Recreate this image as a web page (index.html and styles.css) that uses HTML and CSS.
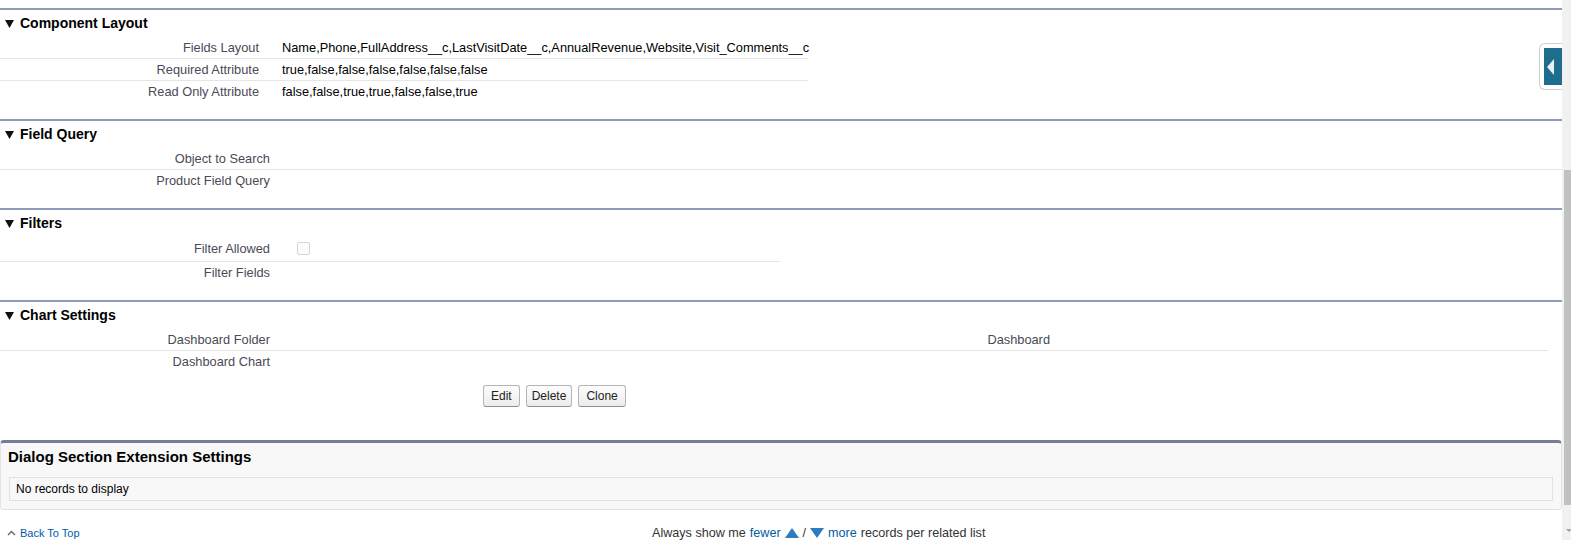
FILE: index.html
```html
<!DOCTYPE html>
<html lang="en">
<head>
  <meta charset="UTF-8" />
  <title>Component Settings</title>
  <link rel="stylesheet" href="styles.css">
</head>
<body>

<div class="main">

  <div class="section">
    <div class="section-head">
      <svg class="tri" width="9" height="8" viewBox="0 0 9 8"><polygon points="0,0 9,0 4.5,8" /></svg>
      Component Layout
    </div>
    <div class="detail detail-layout">
      <div class="row">
        <div class="label">Fields Layout</div>
        <div class="value">Name,Phone,FullAddress__c,LastVisitDate__c,AnnualRevenue,Website,Visit_Comments__c</div>
      </div>
      <div class="row">
        <div class="label">Required Attribute</div>
        <div class="value">true,false,false,false,false,false,false</div>
      </div>
      <div class="row">
        <div class="label">Read Only Attribute</div>
        <div class="value">false,false,true,true,false,false,true</div>
      </div>
    </div>
  </div>

  <div class="section">
    <div class="section-head">
      <svg class="tri" width="9" height="8" viewBox="0 0 9 8"><polygon points="0,0 9,0 4.5,8" /></svg>
      Field Query
    </div>
    <div class="detail detail-query">
      <div class="row">
        <div class="label">Object to Search</div>
        <div class="value"></div>
      </div>
      <div class="row">
        <div class="label">Product Field Query</div>
        <div class="value"></div>
      </div>
    </div>
  </div>

  <div class="section">
    <div class="section-head">
      <svg class="tri" width="9" height="8" viewBox="0 0 9 8"><polygon points="0,0 9,0 4.5,8" /></svg>
      Filters
    </div>
    <div class="detail detail-filters">
      <div class="row row-check">
        <div class="label">Filter Allowed</div>
        <div class="value"><span class="checkbox"></span></div>
      </div>
      <div class="row">
        <div class="label">Filter Fields</div>
        <div class="value"></div>
      </div>
    </div>
  </div>

  <div class="section section-last">
    <div class="section-head">
      <svg class="tri" width="9" height="8" viewBox="0 0 9 8"><polygon points="0,0 9,0 4.5,8" /></svg>
      Chart Settings
    </div>
    <div class="detail detail-chart">
      <div class="row">
        <div class="label">Dashboard Folder</div>
        <div class="value"></div>
        <div class="label">Dashboard</div>
        <div class="value"></div>
      </div>
      <div class="row">
        <div class="label">Dashboard Chart</div>
        <div class="value"></div>
        <div class="label"></div>
        <div class="value"></div>
      </div>
    </div>
  </div>

  <div class="buttons">
    <button class="btn">Edit</button>
    <button class="btn">Delete</button>
    <button class="btn">Clone</button>
  </div>

  <div class="related">
    <h3 class="related-title">Dialog Section Extension Settings</h3>
    <div class="related-body">No records to display</div>
  </div>

  <div class="footer">
    <a class="back-top" href="#">
      <svg width="9" height="6" viewBox="0 0 9 6"><polyline points="1,5 4.5,1.5 8,5" /></svg>
      Back To Top
    </a>
    <div class="show-more">
      <span>Always show me</span>
      <a href="#">fewer</a>
      <svg class="arrow" width="14" height="10" viewBox="0 0 14 10"><polygon points="7,0 14,10 0,10" /></svg>
      <span>/</span>
      <svg class="arrow" width="14" height="10" viewBox="0 0 14 10"><polygon points="0,0 14,0 7,10" /></svg>
      <a href="#">more</a>
      <span>records per related list</span>
    </div>
  </div>

  <div class="side-tab">
    <div class="side-tab-inner">
      <svg width="8" height="16" viewBox="0 0 8 16"><polygon points="7,0 7,16 0,8" /></svg>
    </div>
  </div>
</div>

<div class="scrollbar">
  <div class="thumb"></div>
  <div class="scroll-arrow"></div>
</div>

</body>
</html>
```

FILE: styles.css
```css
* {
  box-sizing: border-box;
}
html, body {
  height: 100%;
}
body {
  margin: 0;
  display: flex;
  overflow: hidden;
  font-family: "Liberation Sans", Arial, sans-serif;
  font-size: 12px;
  color: #000;
  background: #fff;
}
a {
  color: #015ba7;
  text-decoration: none;
}

.main {
  flex: 1;
  position: relative;
  padding-top: 8px;
}

/* detail sections */
.section {
  border-top: 2px solid #8e9bbb;
  margin-bottom: 17px;
}
.section-last {
  margin-bottom: 0;
}
.section-head {
  height: 26px;
  display: flex;
  align-items: center;
  gap: 6px;
  padding-left: 5px;
  font-size: 14px;
  font-weight: bold;
  color: #000;
}
.tri {
  fill: #111;
  margin-top: 1px;
}

.row {
  display: grid;
  height: 22px;
  align-items: center;
  font-size: 12.8px;
}
.row + .row {
  border-top: 1px solid #e6e6e8;
}
.row-check {
  height: 25px;
}
.label {
  text-align: right;
  padding-right: 11px;
  color: #4a4a56;
  white-space: nowrap;
}
.value {
  padding-left: 12px;
  white-space: nowrap;
  display: flex;
  align-items: center;
}

.detail-layout {
  width: 808px;
}
.detail-layout .row {
  grid-template-columns: 270px 1fr;
}
.detail-query .row {
  grid-template-columns: 281px 1fr;
}
.detail-filters {
  width: 780px;
}
.detail-filters .row {
  grid-template-columns: 281px 1fr;
}
.detail-chart {
  width: 1548px;
}
.detail-chart .row {
  grid-template-columns: 281px 500px 280px 1fr;
}

.checkbox {
  width: 13px;
  height: 13px;
  margin-left: 4px;
  border: 1px solid #d6d6d6;
  border-radius: 2px;
  background: #fcfcfc;
}

/* buttons */
.buttons {
  display: flex;
  gap: 6px;
  padding: 13px 0 0 483px;
}
.btn {
  height: 22px;
  padding: 0 7px;
  font-family: "Liberation Sans", Arial, sans-serif;
  font-size: 12px;
  color: #222;
  background: linear-gradient(#fdfdfd, #ececec);
  border: 1px solid #b5b5b5;
  border-bottom-color: #8f8f8f;
  border-radius: 3px;
}
.btn + .btn {
  padding: 0 5px;
}
.btn:last-child {
  padding: 0 7px;
}

/* related list */
.related {
  margin-top: 33px;
  background: #f8f8f8;
  border: 1px solid #e0e3e5;
  border-top: 3px solid #747e96;
  border-radius: 4px;
  padding: 0 8px 8px;
}
.related-title {
  margin: 0 0 0 -1px;
  height: 28px;
  line-height: 28px;
  font-size: 15px;
  font-weight: bold;
  color: #000;
}
.related-body {
  margin-top: 6px;
  height: 24px;
  line-height: 22px;
  padding-left: 6px;
  border: 1px solid #e0e3e5;
  background: #f8f8f8;
  color: #000;
}

/* footer */
.footer {
  display: grid;
  grid-template-columns: 652px auto;
  padding-top: 16px;
  line-height: 14px;
}
.back-top {
  display: flex;
  align-items: center;
  gap: 4px;
  padding-left: 7px;
  font-size: 11px;
}
.back-top svg {
  fill: none;
  stroke: #666;
  stroke-width: 1.4;
}
.show-more {
  display: flex;
  align-items: center;
  gap: 4px;
  font-size: 12.6px;
  color: #333;
  white-space: nowrap;
}
.arrow {
  fill: #2f7bc0;
}

/* collapsed sidebar tab */
.side-tab {
  position: absolute;
  top: 43px;
  right: 0;
  width: 23px;
  height: 47px;
  padding: 4px 0 4px 4px;
  background: #fff;
  border: 1px solid #cfcfcf;
  border-right: none;
  border-radius: 6px 0 0 6px;
}
.side-tab-inner {
  height: 100%;
  background: #1f6d8c;
  display: flex;
  align-items: center;
  padding-left: 3px;
}
.side-tab-inner svg {
  fill: #e9f0f3;
}

/* fake window scrollbar */
.scrollbar {
  width: 9px;
  background: #f1f1f1;
  position: relative;
}
.thumb {
  margin: 170px 0 0 2px;
  height: 335px;
  background: #c1c1c1;
}
.scroll-arrow {
  margin: 24px 0 0 4px;
  width: 0;
  height: 0;
  border-left: 3px solid transparent;
  border-right: 3px solid transparent;
  border-top: 3px solid #a3a3a3;
}
```
